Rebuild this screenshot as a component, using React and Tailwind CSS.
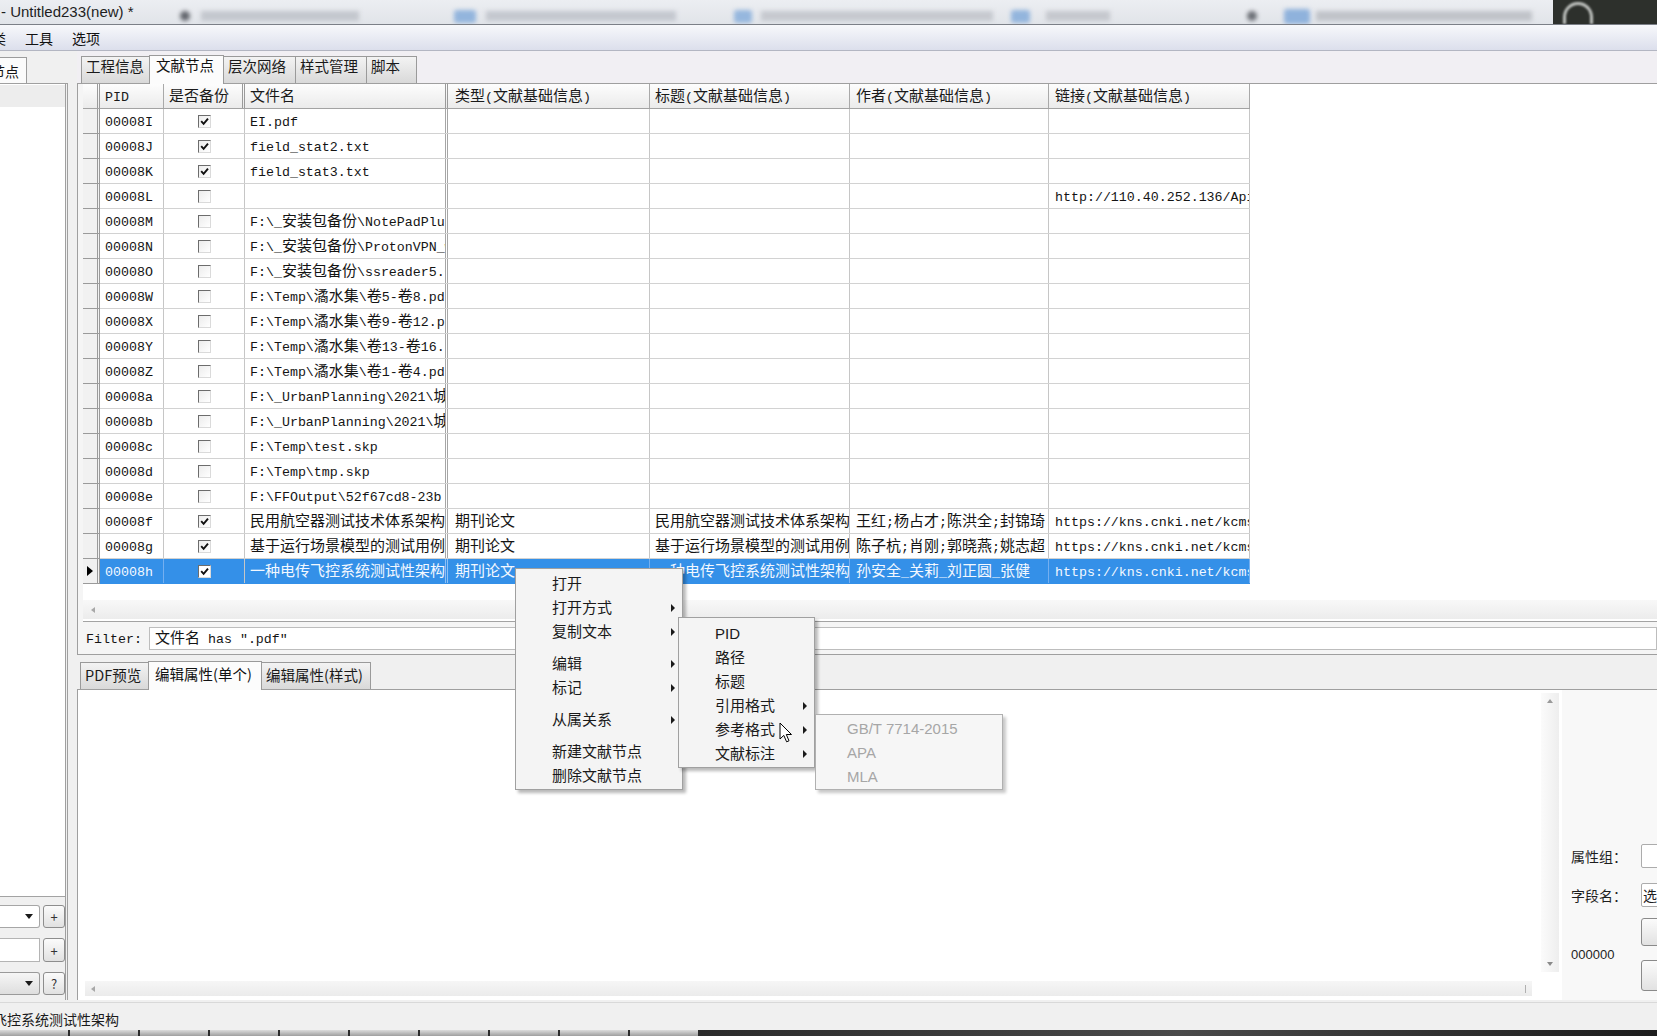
import React from 'react';

const MONO = "font-['Liberation_Mono','Noto_Sans_CJK_SC',monospace]";
const UI = "font-['Liberation_Sans','Noto_Sans_CJK_SC',sans-serif]";

const CJK_RE = /([\u2E80-\u9FFF\u3000-\u303F\uFF00-\uFFEF]+)/;

// grid font: half-width latin 8px, CJK runs a bit larger like SimSun
function Mixed({ text }) {
  return text.split(CJK_RE).map((p, i) =>
    i % 2 ? (
      <span key={i} className="text-[15px]">{p}</span>
    ) : (
      <React.Fragment key={i}>{p}</React.Fragment>
    )
  );
}

const ROWS = [
  { pid: '00008I', bak: true, file: 'EI.pdf' },
  { pid: '00008J', bak: true, file: 'field_stat2.txt' },
  { pid: '00008K', bak: true, file: 'field_stat3.txt' },
  { pid: '00008L', bak: false, file: '', link: 'http://110.40.252.136/Api/Download' },
  { pid: '00008M', bak: false, file: 'F:\\_安装包备份\\NotePadPlus_8.1.exe' },
  { pid: '00008N', bak: false, file: 'F:\\_安装包备份\\ProtonVPN_win.exe' },
  { pid: '00008O', bak: false, file: 'F:\\_安装包备份\\ssreader5.0.exe' },
  { pid: '00008W', bak: false, file: 'F:\\Temp\\潏水集\\卷5-卷8.pdf' },
  { pid: '00008X', bak: false, file: 'F:\\Temp\\潏水集\\卷9-卷12.pdf' },
  { pid: '00008Y', bak: false, file: 'F:\\Temp\\潏水集\\卷13-卷16.pdf' },
  { pid: '00008Z', bak: false, file: 'F:\\Temp\\潏水集\\卷1-卷4.pdf' },
  { pid: '00008a', bak: false, file: 'F:\\_UrbanPlanning\\2021\\城市规划.pdf' },
  { pid: '00008b', bak: false, file: 'F:\\_UrbanPlanning\\2021\\城市设计.pdf' },
  { pid: '00008c', bak: false, file: 'F:\\Temp\\test.skp' },
  { pid: '00008d', bak: false, file: 'F:\\Temp\\tmp.skp' },
  { pid: '00008e', bak: false, file: 'F:\\FFOutput\\52f67cd8-23b' },
  {
    pid: '00008f', bak: true, file: '民用航空器测试技术体系架构.pdf', type: '期刊论文',
    title: '民用航空器测试技术体系架构', author: '王红;杨占才;陈洪全;封锦琦', link: 'https://kns.cnki.net/kcms/detail',
  },
  {
    pid: '00008g', bak: true, file: '基于运行场景模型的测试用例生成.pdf', type: '期刊论文',
    title: '基于运行场景模型的测试用例生成', author: '陈子杭;肖刚;郭晓燕;姚志超', link: 'https://kns.cnki.net/kcms/detail',
  },
  {
    pid: '00008h', bak: true, sel: true, file: '一种电传飞控系统测试性架构.pdf', type: '期刊论文',
    title: '一种电传飞控系统测试性架构', author: '孙安全_关莉_刘正圆_张健', link: 'https://kns.cnki.net/kcms/detail',
  },
];

function TitleBar() {
  return (
    <div className="h-[25px] shrink-0 flex items-center overflow-hidden bg-linear-to-b from-[#eceef2] to-[#e1e4e9] border-b border-[#7b7f87]">
      <span className={`${UI} ml-[1px] text-[15px] leading-[18px] text-[#1e1e1e] whitespace-nowrap w-[142px] shrink-0`}>
        - Untitled233(new) *
      </span>
      {/* blurred window thumbnails behind the title */}
      <div className="mt-[8px] ml-[37px] w-[10px] h-[10px] shrink-0 rounded-full bg-[#62656c] blur-[2px]" />
      <div className="mt-[8px] ml-[11px] w-[158px] h-[10px] shrink-0 bg-[#c3c7ce] blur-[2px]" />
      <div className="mt-[8px] ml-[95px] w-[22px] h-[13px] shrink-0 rounded-[3px] bg-[#93b5dd] blur-[2px]" />
      <div className="mt-[8px] ml-[10px] w-[190px] h-[10px] shrink-0 bg-[#c4c8cf] blur-[2px]" />
      <div className="mt-[8px] ml-[58px] w-[18px] h-[13px] shrink-0 rounded-[3px] bg-[#96b7de] blur-[2px]" />
      <div className="mt-[8px] ml-[9px] w-[232px] h-[10px] shrink-0 bg-[#c6c9cf] blur-[2px]" />
      <div className="mt-[8px] ml-[18px] w-[19px] h-[13px] shrink-0 rounded-[3px] bg-[#93b5dd] blur-[2px]" />
      <div className="mt-[8px] ml-[16px] w-[64px] h-[10px] shrink-0 bg-[#c5c8ce] blur-[2px]" />
      <div className="mt-[8px] ml-[137px] w-[10px] h-[10px] shrink-0 rounded-full bg-[#6c6f76] blur-[2px]" />
      <div className="mt-[8px] ml-[27px] w-[26px] h-[15px] shrink-0 rounded-[3px] bg-[#8fb2dc] blur-[2px]" />
      <div className="mt-[8px] ml-[6px] w-[216px] h-[10px] shrink-0 bg-[#c0c3c9] blur-[2px]" />
      <div className="ml-[21px] w-[104px] h-full shrink-0 bg-[#2d302c] flex items-end pl-[10px]">
        <div className="w-[30px] h-[22px] rounded-t-full border-[3px] border-b-0 border-[#c2c5c2] blur-[1px]" />
      </div>
    </div>
  );
}

function MenuBar() {
  return (
    <div className="h-[26px] shrink-0 flex items-center bg-linear-to-b from-[#f7f8fb] to-[#dcdfec] border-b border-[#b3b6c2] text-[14px] leading-[18px] text-[#111]">
      <span className="-ml-[8px]">类</span>
      <span className="ml-[19px]">工具</span>
      <span className="ml-[19px]">选项</span>
    </div>
  );
}

function SmallDown() {
  return <span className="w-0 h-0 border-l-[4px] border-r-[4px] border-t-[5px] border-l-transparent border-r-transparent border-t-[#1a1a1a]" />;
}

function SmallBtn({ children }) {
  return (
    <div className="ml-[3px] w-[22px] h-full shrink-0 rounded-[3px] border border-[#8d8d8d] bg-linear-to-b from-[#fbfbfb] to-[#e1e1e1] flex items-center justify-center text-[13px] leading-none text-[#333]">
      {children}
    </div>
  );
}

function LeftPanel() {
  return (
    <div className="w-[68px] shrink-0 flex flex-col">
      <div className="h-[32px] shrink-0 flex items-end">
        <div className="w-[27px] h-[26px] overflow-hidden bg-[#fbfbfb] border-t border-r border-[#9c9c9c] text-[14px] leading-[18px] pt-[4px] whitespace-nowrap">
          <span className="-ml-[9px] inline-block">节点</span>
        </div>
      </div>
      <div className="flex-1 flex flex-col border-t border-r-[3px] border-double border-[#a0a0a0] mb-[2px]">
        <div className="h-[813px] shrink-0 bg-white border-b border-[#a3a3a3]">
          <div className="mt-[1px] h-[22px] bg-[#ededed]" />
        </div>
        <div className="mt-[8px] h-[23px] flex">
          <div className="w-[40px] shrink-0 bg-white border border-l-0 border-[#a6a6a6] rounded-r-[3px] flex items-center justify-end pr-[6px]">
            <SmallDown />
          </div>
          <SmallBtn>+</SmallBtn>
        </div>
        <div className="mt-[10px] h-[24px] flex">
          <div className="w-[40px] shrink-0 bg-white border border-l-0 border-[#b4b4b4]" />
          <SmallBtn>+</SmallBtn>
        </div>
        <div className="mt-[10px] h-[23px] flex">
          <div className="w-[40px] shrink-0 bg-linear-to-b from-[#f6f6f6] to-[#dedede] border border-l-0 border-[#9a9a9a] rounded-r-[3px] flex items-center justify-end pr-[6px]">
            <SmallDown />
          </div>
          <SmallBtn>?</SmallBtn>
        </div>
      </div>
    </div>
  );
}

function Tab({ w, active, low, children }) {
  return active ? (
    <div className={`${w} ${low ? 'pt-[3px]' : 'pt-0'} shrink-0 h-[29px] -ml-px -mb-px relative z-10 bg-[#fcfcfc] border border-b-0 border-[#9a9a9a] pl-[6px] text-[14.5px] leading-[18px] text-[#111] whitespace-nowrap`}>
      {children}
    </div>
  ) : (
    <div className={`${w} ${low ? 'pt-[3px]' : 'pt-0'} shrink-0 h-[27px] -ml-px bg-linear-to-b from-[#f3f3f3] to-[#d9d9d9] border border-b-0 border-[#9a9a9a] pl-[4px] text-[14.5px] leading-[18px] text-[#1a1a1a] whitespace-nowrap`}>
      {children}
    </div>
  );
}

function Check({ on, sel }) {
  return (
    <span className={`w-[13px] h-[13px] flex items-center justify-center border border-t-[#6c6c6c] border-l-[#6c6c6c] border-r-[#dadada] border-b-[#dadada] ${sel ? 'bg-white' : 'bg-linear-to-br from-[#ececec] to-white'}`}>
      {on && (
        <svg width="9" height="9" viewBox="0 0 9 9">
          <path d="M1.2 4.2 L3.6 6.8 L8 1.6" fill="none" stroke="#111" strokeWidth="1.9" />
        </svg>
      )}
    </span>
  );
}

function HeadCell({ w, dbl, pl, children }) {
  return (
    <div className={`${w} ${pl || 'pl-[5px]'} shrink-0 h-full flex items-center pt-[3px] overflow-hidden whitespace-nowrap ${dbl ? 'border-r-[3px] border-double border-[#9a9a9a]' : 'border-r border-[#a9a9a9]'}`}>
      <span className="leading-[18px]"><Mixed text={children} /></span>
    </div>
  );
}

function DataRow({ r }) {
  const s = r.sel;
  const c = `shrink-0 h-full flex items-center pt-[3px] overflow-hidden whitespace-nowrap border-r ${s ? 'border-[#74aff0]' : 'border-[#c6c6c6]'}`;
  const t = (txt) => <span className="leading-[18px]"><Mixed text={txt || ''} /></span>;
  return (
    <div className="h-[25px] shrink-0 flex">
      <div className="w-[17px] shrink-0 h-full bg-[#f1f1f1] border-r-[3px] border-b border-double border-[#9a9a9a] flex items-center justify-center">
        {s && <span className="w-0 h-0 border-t-[5px] border-b-[5px] border-l-[6px] border-t-transparent border-b-transparent border-l-black" />}
      </div>
      <div className={`flex h-full border-b ${s ? 'bg-[#3490e8] text-[#f3f8ff] border-[#3490e8]' : 'text-[#141414] border-[#d2d2d2]'}`}>
        <div className={`${c} w-[64px] pl-[5px]`}>{t(r.pid)}</div>
        <div className="w-[81px] shrink-0 h-full flex items-center justify-center border-r border-[#c6c6c6]"><Check on={r.bak} sel={s} /></div>
        <div className={`w-[203px] pl-[5px] pt-[3px] shrink-0 h-full flex items-center overflow-hidden whitespace-nowrap border-r-[3px] border-double ${s ? 'border-[#8fc0f5]' : 'border-[#a6a6a6]'}`}>{t(r.file)}</div>
        <div className={`${c} w-[202px] pl-[7px]`}>{t(r.type)}</div>
        <div className={`${c} w-[200px] pl-[5px]`}>{t(r.title)}</div>
        <div className={`${c} w-[199px] pl-[6px]`}>{t(r.author)}</div>
        <div className={`${c} w-[201px] pl-[6px]`}>{t(r.link)}</div>
      </div>
    </div>
  );
}

function Grid() {
  return (
    <div className={`h-[538px] shrink-0 flex flex-col bg-white border-b border-[#a3a3a3] ${MONO} text-[13.3px]`}>
      <div className="h-[25px] shrink-0 flex text-[#1a1a1a]">
        <div className="flex h-full bg-linear-to-b from-[#fdfdfd] to-[#ebebeb] border-b border-[#a3a3a3]">
          <div className="w-[17px] h-full shrink-0 border-r-[3px] border-double border-[#9a9a9a]" />
          <HeadCell w="w-[64px]">PID</HeadCell>
          <HeadCell w="w-[81px]" dbl>是否备份</HeadCell>
          <HeadCell w="w-[203px]" dbl>文件名</HeadCell>
          <HeadCell w="w-[202px]" pl="pl-[7px]">类型(文献基础信息)</HeadCell>
          <HeadCell w="w-[200px]">标题(文献基础信息)</HeadCell>
          <HeadCell w="w-[199px]" pl="pl-[6px]">作者(文献基础信息)</HeadCell>
          <HeadCell w="w-[201px]" pl="pl-[6px]">链接(文献基础信息)</HeadCell>
        </div>
      </div>
      {ROWS.map((r) => (
        <DataRow key={r.pid} r={r} />
      ))}
      <div className="flex-1" />
      <div className="h-[19px] mb-[2px] shrink-0 bg-linear-to-b from-[#f8f8f8] to-[#ececec] flex items-center pl-[8px]">
        <span className="w-0 h-0 border-t-[3px] border-b-[3px] border-r-[4px] border-t-transparent border-b-transparent border-r-[#a8a8a8]" />
      </div>
    </div>
  );
}

function MainArea() {
  return (
    <div className="flex-1 min-w-0 flex flex-col">
      <div className="h-[32px] shrink-0 flex items-end pl-[5px] bg-[#f1eff3]">
        <Tab w="w-[69px]">工程信息</Tab>
        <Tab w="w-[75px]" active>文献节点</Tab>
        <Tab w="w-[73px]">层次网络</Tab>
        <Tab w="w-[72px]">样式管理</Tab>
        <Tab w="w-[51px]">脚本</Tab>
      </div>
      <div className="h-[572px] shrink-0 flex flex-col border-t border-l border-b border-[#9f9f9f] bg-[#f5f5f5] pl-[5px]">
        <Grid />
        <div className={`flex-1 flex items-center pt-[1px] ${MONO} text-[13.3px] text-[#141414]`}>
          <span className="ml-[3px] w-[63px] shrink-0 pt-[2px]">Filter:</span>
          <div className="flex-1 h-[23px] bg-white border border-[#bdbdbd] flex items-center pt-[2px] pl-[5px] whitespace-nowrap">
            <span className="leading-[18px]"><Mixed text={'文件名 has ".pdf"'} /></span>
          </div>
        </div>
      </div>
      <div className="h-[34px] shrink-0 flex items-end pl-[4px]">
        <Tab w="w-[69px]" low>PDF预览</Tab>
        <Tab w="w-[114px]" active low>编辑属性(单个)</Tab>
        <Tab w="w-[110px]" low>编辑属性(样式)</Tab>
      </div>
      <div className="flex-1 mb-[2px] flex border-t border-l border-[#9f9f9f]">
        <div className="flex-1 flex flex-col bg-white pt-[3px] pr-[3px] pb-[4px]">
          <div className="flex-1 flex">
            <div className="flex-1" />
            <div className="w-[18px] shrink-0 flex flex-col items-center justify-between py-[6px] bg-linear-to-r from-[#fbfbfb] to-[#eeeeee]">
              <span className="w-0 h-0 border-l-[3px] border-r-[3px] border-b-[4px] border-l-transparent border-r-transparent border-b-[#9a9a9a]" />
              <span className="w-0 h-0 border-l-[3px] border-r-[3px] border-t-[4px] border-l-transparent border-r-transparent border-t-[#8a8a8a]" />
            </div>
          </div>
          <div className="h-[9px] shrink-0" />
          <div className="h-[15px] shrink-0 ml-[7px] mr-[27px] flex items-center justify-between px-[6px] bg-linear-to-b from-[#f6f6f6] to-[#ebebeb]">
            <span className="w-0 h-0 border-t-[3px] border-b-[3px] border-r-[4px] border-t-transparent border-b-transparent border-r-[#a8a8a8]" />
            <span className="w-[1px] h-[8px] bg-[#b0b0b0]" />
          </div>
        </div>
        <div className="w-[95px] shrink-0 flex flex-col bg-[#f8f8f8] pt-[154px] pl-[9px] text-[14px] leading-[18px] text-[#1e1e1e]">
          <div className="h-[24px] flex items-center">
            <span className="w-[70px] shrink-0">属性组：</span>
            <div className="w-[40px] h-full shrink-0 bg-white border border-[#acacac] rounded-[2px]" />
          </div>
          <div className="mt-[15px] h-[24px] flex items-center">
            <span className="w-[70px] shrink-0">字段名：</span>
            <div className="w-[40px] h-full shrink-0 bg-white border border-[#acacac] rounded-[2px] pl-[1px] flex items-center">选</div>
          </div>
          <div className="mt-[11px] h-[28px] flex">
            <span className="w-[70px] shrink-0" />
            <div className="w-[40px] h-full shrink-0 rounded-[3px] border border-[#8a8a8a] bg-linear-to-b from-[#fbfbfb] to-[#e2e2e2]" />
          </div>
          <div className="mt-[14px] h-[31px] flex items-start">
            <span className={`${UI} w-[70px] shrink-0 -mt-[14px] text-[13px]`}>000000</span>
            <div className="w-[40px] h-full shrink-0 rounded-[3px] border border-[#8a8a8a] bg-linear-to-b from-[#fbfbfb] to-[#e2e2e2]" />
          </div>
        </div>
      </div>
    </div>
  );
}

function MenuArrow() {
  return <span className="w-0 h-0 border-t-[4px] border-b-[4px] border-l-[4px] border-t-transparent border-b-transparent border-l-[#1a1a1a]" />;
}

function MI({ label, sub, gray }) {
  return (
    <div className={`h-[24px] flex items-center justify-between pr-[7px] text-[15px] leading-[20px] whitespace-nowrap ${gray ? 'text-[#a6a6a6]' : 'text-[#1a1a1a]'}`}>
      <span>{label}</span>
      {sub && <MenuArrow />}
    </div>
  );
}

function ContextMenus() {
  return (
    <>
      <div className={`${UI} absolute left-[515px] top-[568px] w-[168px] h-[222px] pl-[36px] py-[3px] bg-[#f4f4f4] border border-[#a0a0a0] shadow-[3px_3px_3px_rgba(0,0,0,0.28)]`}>
        <MI label="打开" />
        <MI label="打开方式" sub />
        <MI label="复制文本" sub />
        <div className="h-[8px]" />
        <MI label="编辑" sub />
        <MI label="标记" sub />
        <div className="h-[8px]" />
        <MI label="从属关系" sub />
        <div className="h-[8px]" />
        <MI label="新建文献节点" />
        <MI label="删除文献节点" />
      </div>
      <div className={`${UI} absolute left-[678px] top-[617px] w-[137px] h-[151px] pl-[36px] py-[4px] bg-[#f4f4f4] border border-[#a0a0a0] shadow-[3px_3px_3px_rgba(0,0,0,0.28)]`}>
        <MI label="PID" />
        <MI label="路径" />
        <MI label="标题" />
        <MI label="引用格式" sub />
        <MI label="参考格式" sub />
        <MI label="文献标注" sub />
      </div>
      <div className={`${UI} absolute left-[815px] top-[714px] w-[188px] h-[76px] pl-[31px] py-[2px] bg-[#f6f6f6] border border-[#b0b0b0] shadow-[3px_3px_3px_rgba(0,0,0,0.22)]`}>
        <MI label="GB/T 7714-2015" gray />
        <MI label="APA" gray />
        <MI label="MLA" gray />
      </div>
      <svg className="absolute left-[779px] top-[722px]" width="14" height="22" viewBox="0 0 14 22">
        <path d="M1 1 L1 17 L4.8 13.4 L7.6 19.8 L10 18.8 L7.3 12.5 L12.5 12.5 Z" fill="white" stroke="black" strokeWidth="1" strokeLinejoin="round" />
      </svg>
    </>
  );
}

function StatusBar() {
  return (
    <div className="h-[28px] shrink-0 flex items-center pt-[5px] bg-[#f0f0f0] border-t border-[#d9d9d9] overflow-hidden whitespace-nowrap">
      <span className="-ml-[7px] text-[14px] leading-[18px] text-[#1a1a1a]">飞控系统测试性架构</span>
    </div>
  );
}

function Taskbar() {
  const segs = [0, 1, 2, 3, 4, 5, 6, 7, 8, 9];
  return (
    <div className="h-[6px] shrink-0 flex bg-[#222]">
      {segs.map((i) => (
        <div key={i} className="w-[70px] h-full shrink-0 bg-linear-to-b from-[#dcdcdc] to-[#9f9f9f] border-r-2 border-[#2a2a2a]" />
      ))}
      <div className="flex-1 h-full bg-linear-to-r from-[#2b2b2b] via-[#4a4a4a] to-[#1d1d1d]" />
    </div>
  );
}

export default function App() {
  return (
    <div className={`relative w-[1657px] h-[1036px] overflow-hidden flex flex-col bg-[#f0f0f0] text-[#141414] font-['Noto_Sans_CJK_SC','Liberation_Sans',sans-serif]`}>
      <TitleBar />
      <MenuBar />
      <div className="flex-1 min-h-0 flex">
        <LeftPanel />
        <div className="w-[9px] shrink-0" />
        <MainArea />
      </div>
      <StatusBar />
      <Taskbar />
      <ContextMenus />
    </div>
  );
}
